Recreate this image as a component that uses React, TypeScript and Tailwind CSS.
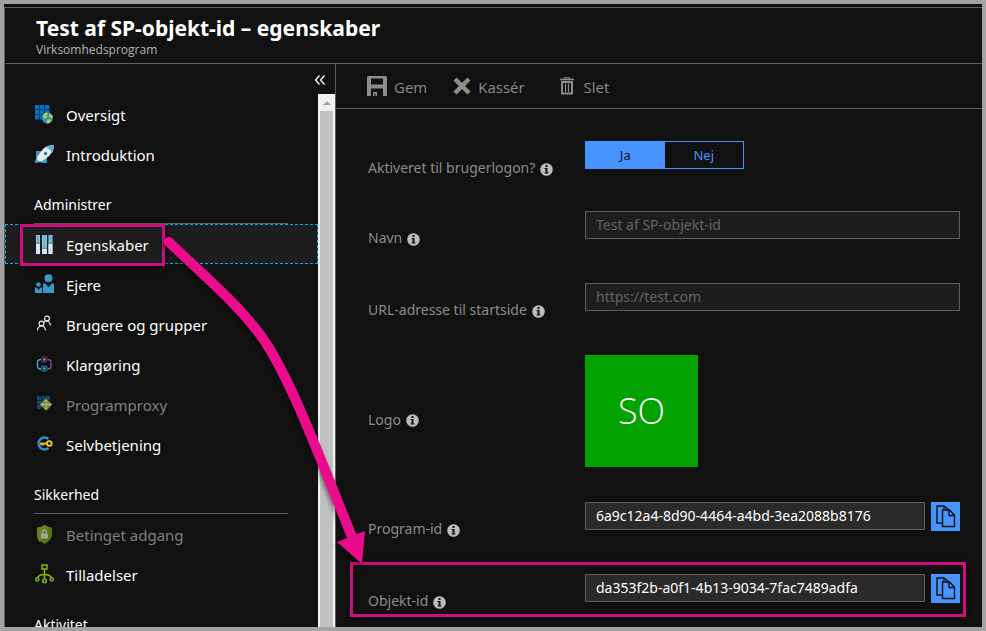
import type { ReactNode } from "react";

const OverviewIcon = () => (
  <svg width="20" height="20" viewBox="0 0 20 20" aria-hidden="true">
    <g fill="#0072c6">
      <path d="M0 1h4.400v4.400H0zM5 1h4.400v4.400H5zM10 1h4.400v4.400H10zM0 6h4.400v4.400H0zM5 6h4.400v4.400H5zM10 6h4.400v4.400H10zM0 11h4.400v4.400H0zM5 11h4.400v4.400H5z" />
    </g>
    <circle cx="12.500" cy="14" r="5.500" fill="#3c91c9" />
    <path d="M8 11q2-3 4-2.500l1 2-2 1 1 2-2 1-2-1.500zM14 9q3 1 4 4l-2 1-2-1.500 1-2zM12 16l2.500-1 1.500 1.500-2 2.800-2 .2z" fill="#b8d432" />
  </svg>
);

const RocketIcon = () => (
  <svg width="20" height="20" viewBox="0 0 20 20" aria-hidden="true">
    <path d="M1 7h6l-3 5-3 2zM12 12v7H6l1-3z" fill="#3999c6" />
    <path d="M0 19l1-5 3 1 1 3z" fill="#59b4d9" />
    <path d="M19 1q-7 0-11 4l-6 8q0 4 4 5l8-6q5-5 5-11z" fill="#e8eaec" />
    <path d="M19 1q-5 0-8 2 4 2 6 6 2-3 2-8z" fill="#59b4d9" />
    <circle cx="10.500" cy="9.500" r="1.600" fill="#0072c6" />
  </svg>
);

const PropertiesIcon = () => (
  <svg width="20" height="20" viewBox="0 0 20 20" aria-hidden="true">
    <path d="M1 1h4v19H1zM7 1h5v19H7zM13.500 1h4v19h-4z" fill="#9fc4d6" />
    <path d="M2 1h2v8H2zM8.500 1h2v12h-2zM14.500 1h2v8h-2z" fill="#59b4d9" />
    <path d="M1 10h4v10H1zM7 15h5v5H7zM13.500 10h4v10h-4z" fill="#d3e6f1" />
    <path d="M1 8.500h4V10H1zM7 13.500h5V15H7zM13.500 8.500h4V10h-4z" fill="#8a8f92" />
  </svg>
);

const OwnersIcon = () => (
  <svg width="20" height="20" viewBox="0 0 20 20" fill="#3999c6" aria-hidden="true">
    <circle cx="13.500" cy="4.300" r="4" />
    <path d="M8 9.500h2.500l3 4 3-4h1.500q1 0 1 1V19H8z" />
    <circle cx="3.500" cy="10.500" r="2.300" />
    <path d="M0 13.500h1.500l2 2.500 2-2.500H7V19H0z" />
  </svg>
);

const UsersIcon = () => (
  <svg width="20" height="20" viewBox="0 0 20 20" fill="none" stroke="#e8e8e8" strokeWidth="1.200" aria-hidden="true">
    <circle cx="12" cy="4.500" r="2.400" />
    <path d="M8.500 9q1-2 3.500-2t3.500 4.500" />
    <circle cx="6.500" cy="9.500" r="2.400" />
    <path d="M2.500 16.500q.5-4.500 4-4.500t4 4.500" />
  </svg>
);

const ProvisioningIcon = () => (
  <svg width="20" height="20" viewBox="0 0 20 20" fill="none" strokeWidth="1.300" aria-hidden="true">
    <path d="M6.500 5.500H5Q2.500 6 2.500 8v4q0 3 3 3h1" stroke="#3fa7d6" />
    <path d="M12.500 5.500h1q2.500.5 2.500 2.500v4q0 3-3 3h-.5" stroke="#8f3fb0" />
    <circle cx="9.300" cy="5.600" r="2.800" stroke="#68217a" />
    <circle cx="9.300" cy="14.600" r="2.800" stroke="#0072c6" />
    <circle cx="9.300" cy="5.600" r="1.300" fill="#7fba00" />
    <circle cx="9.300" cy="14.600" r="1.300" fill="#7fba00" />
  </svg>
);

const ProxyIcon = () => (
  <svg width="20" height="20" viewBox="0 0 20 20" aria-hidden="true">
    <path d="M2 2h4v4H2zM6.500 2h4v4h-4zM11 2h4v4h-4zM2 6.500h4v4H2zM6.500 6.500h4v4h-4zM2 11h4v4H2z" fill="#10466f" />
    <path d="M11 4l6.500 6.500L11 17 4.500 10.500z" fill="#71842d" />
    <path d="M11 6v9M6.500 10.500h9M9.500 7.500L11 6l1.500 1.500M9.500 13.500L11 15l1.500-1.500M8 9l-1.500 1.500L8 12M14 9l1.500 1.500L14 12" fill="none" stroke="#b4bd92" />
  </svg>
);

const SelfServiceIcon = () => (
  <svg width="20" height="20" viewBox="0 0 20 20" fill="none" aria-hidden="true">
    <path d="M13.500 5A6 6 0 1 0 13.500 14" stroke="#2f8fd0" strokeWidth="2.400" />
    <circle cx="14.300" cy="9.500" r="2.300" stroke="#fcd116" strokeWidth="1.800" />
    <path d="M12 9.500H5M6.500 9.500v2M8.500 9.500v2" stroke="#fba919" strokeWidth="1.800" />
  </svg>
);

const ShieldIcon = () => (
  <svg width="20" height="20" viewBox="0 0 20 20" aria-hidden="true">
    <path d="M9.500 1q3.500 2.500 7.500 2.500V10q0 6-7.500 10Q2 16 2 10V3.500Q6 3.500 9.500 1z" fill="#53760f" />
    <path d="M9.500 1Q6 3.500 2 3.500V10q0 6 3 8L14 3z" fill="#64851f" />
    <path d="M6 9.500h7v5H6z" fill="#a3a3a3" />
    <path d="M7.500 9.500V8q0-2 2-2t2 2v1.500" fill="none" stroke="#a3a3a3" strokeWidth="1.300" />
  </svg>
);

const PermissionsIcon = () => (
  <svg width="20" height="20" viewBox="0 0 20 20" fill="none" stroke="#7fba00" strokeWidth="1.500" aria-hidden="true">
    <path d="M7 1h5v4H7zM9.500 5v10M9.500 10.500q-6 0-7 3.500M9.500 10.500q6 0 7 3.500" />
    <circle cx="2.300" cy="15.300" r="1.600" />
    <circle cx="9.500" cy="16.800" r="1.800" />
    <circle cx="16.700" cy="15.300" r="1.600" />
  </svg>
);

const InfoIcon = () => (
  <svg width="13" height="13" viewBox="0 0 13 13" className="mt-[2px] shrink-0" aria-hidden="true">
    <circle cx="6.500" cy="6.500" r="6.300" fill="#bdbdbd" />
    <path d="M5.500 2h2v2h-2zM4.500 5h3v4.500h1v1h-4v-1h1V6h-1z" fill="#111" />
  </svg>
);

const SaveIcon = () => (
  <svg width="20" height="20" viewBox="0 0 20 20" aria-hidden="true">
    <path fillRule="evenodd" d="M1 0h18l1 1v19h-4v-7.500H4V20H0V1zM4 2.500h12v6H4zM6 16h4v4H8.500v-2.500H7.500V20H6z" fill="#8c8c8c" />
  </svg>
);

const DiscardIcon = () => (
  <svg width="18" height="18" viewBox="0 0 18 18" aria-hidden="true">
    <path d="M2 2l14 14M16 2L2 16" stroke="#8c8c8c" strokeWidth="4.500" />
  </svg>
);

const TrashIcon = () => (
  <svg width="14" height="18" viewBox="0 0 14 18" fill="none" stroke="#8c8c8c" aria-hidden="true">
    <path d="M0 2.500h14" strokeWidth="1.600" />
    <path d="M4.500 2V.7h5V2" />
    <path d="M2 5h10v11.500H2z" strokeWidth="2" />
    <path d="M5.500 6.500v8.500M8.500 6.500v8.500" strokeWidth="1.200" />
  </svg>
);

const CopyIcon = () => (
  <svg width="20" height="23" viewBox="0 0 20 23" fill="none" stroke="#111" strokeWidth="1.400" aria-hidden="true">
    <path d="M6 18H1V1h7l5 4" />
    <path d="M6.500 5h7l5 5v11.500h-12z" />
    <path d="M13 5v5.500h5.500" />
    <path d="M8 1v3.500" />
  </svg>
);

function NavItem({
  icon,
  children,
  muted = false,
  selected = false,
}: {
  icon: ReactNode;
  children: ReactNode;
  muted?: boolean;
  selected?: boolean;
}) {
  return (
    <li className="relative">
      <a
        href="#"
        aria-current={selected ? "page" : undefined}
        className={`flex h-10 items-center gap-[11px] border pl-[29px] text-[15px] leading-5 ${
          selected ? "border-dashed border-[#00abec] bg-[#1d1d1d]" : "border-transparent"
        } ${muted ? "text-[#808080]" : "text-white"}`}
      >
        {icon}
        <span className="pt-0.5">{children}</span>
      </a>
      {selected && (
        <span className="pointer-events-none absolute top-0 left-[15px] h-[42px] w-[145px] border-3 border-[#cb0f7f] shadow-[2px_2px_4px_#0008]" />
      )}
    </li>
  );
}

function Heading({ children }: { children: ReactNode }) {
  return (
    <h2 className="mr-[30px] ml-[29px] h-[50px] border-b border-[#5e5e5e] pt-[21px] text-[14px] leading-5 text-white">
      {children}
    </h2>
  );
}

function Row({
  label,
  id,
  center = false,
  children,
}: {
  label: string;
  id?: string;
  center?: boolean;
  children: ReactNode;
}) {
  return (
    <div className={`flex ${center ? "items-center" : "items-start"}`}>
      <div className="flex w-[217px] shrink-0 items-center gap-[5px] pt-[17px]">
        <label htmlFor={id} className="text-[14px] leading-5 text-[#8c8c8c]">
          {label}
        </label>
        <InfoIcon />
      </div>
      {children}
    </div>
  );
}

const fieldClass = "h-7 min-w-0 flex-1 border border-[#5e5e5e] px-[10px] pb-0.5 text-[14px] leading-5 outline-none";

function CopyField({ id, value }: { id: string; value: string }) {
  return (
    <div className="flex flex-1 items-start gap-[6px]">
      <input id={id} readOnly defaultValue={value} className={`${fieldClass} bg-[#2a2a2a] text-white`} />
      <button type="button" aria-label="Kopiér" className="flex size-[29px] items-center justify-center bg-[#4894fe]">
        <CopyIcon />
      </button>
    </div>
  );
}

export default function App() {
  return (
    <div className="relative h-screen overflow-hidden border-4 border-[#a3a3a3] bg-[#111] pt-[3px] font-['Noto_Sans','Open_Sans',sans-serif]">
      <div className="flex h-full flex-col border-t border-l border-[#5e5e5e]">
        <header className="h-14 shrink-0 border-b border-[#5e5e5e] pl-[31px]">
          <h1 className="pt-[6px] text-[21px] leading-7 font-bold text-white">Test af SP-objekt-id – egenskaber</h1>
          <p className="font-['Open_Sans',sans-serif] text-[12px] leading-4 text-[#b4b4b4]">Virksomhedsprogram</p>
        </header>
        <div className="flex min-h-0 flex-1">
          <aside className="flex w-[331px] shrink-0 flex-col border-r border-[#5e5e5e]">
            <button aria-label="Skjul menu" className="flex h-[30px] shrink-0 items-center self-end px-[9px] pt-0.5 text-white">
              <svg width="12" height="12" viewBox="0 0 12 12" fill="none" stroke="currentColor" strokeWidth="1.300">
                <path d="M5.500 1.500L1.500 6l4 4.500M10.500 1.500L6.500 6l4 4.500" />
              </svg>
            </button>
            <div className="flex min-h-0 flex-1">
              <nav className="min-w-0 flex-1 overflow-hidden">
                <ul>
                  <NavItem icon={<OverviewIcon />}>Oversigt</NavItem>
                  <NavItem icon={<RocketIcon />}>Introduktion</NavItem>
                </ul>
                <Heading>Administrer</Heading>
                <ul>
                  <NavItem icon={<PropertiesIcon />} selected>Egenskaber</NavItem>
                  <NavItem icon={<OwnersIcon />}>Ejere</NavItem>
                  <NavItem icon={<UsersIcon />}>Brugere og grupper</NavItem>
                  <NavItem icon={<ProvisioningIcon />}>Klargøring</NavItem>
                  <NavItem icon={<ProxyIcon />} muted>Programproxy</NavItem>
                  <NavItem icon={<SelfServiceIcon />}>Selvbetjening</NavItem>
                </ul>
                <Heading>Sikkerhed</Heading>
                <ul>
                  <NavItem icon={<ShieldIcon />} muted>Betinget adgang</NavItem>
                  <NavItem icon={<PermissionsIcon />}>Tilladelser</NavItem>
                </ul>
                <Heading>Aktivitet</Heading>
              </nav>
              <div className="flex w-[17px] flex-col items-center bg-[#f1f1f1]">
                <div className="flex h-[17px] shrink-0 items-center">
                  <svg width="8" height="4" viewBox="0 0 8 4" aria-hidden="true">
                    <path d="M0 4l4-4 4 4z" fill="#a3a3a3" />
                  </svg>
                </div>
                <div className="w-[13px] flex-1 bg-[#c1c1c1]" />
              </div>
            </div>
          </aside>
          <main className="min-w-0 flex-1">
            <div className="flex h-[45px] items-center border-b border-[#5e5e5e] pl-[31px] font-['Open_Sans',sans-serif] text-[15px] leading-5 text-[#8c8c8c]">
              <button className="flex items-center gap-[7px]">
                <SaveIcon />
                <span className="pt-0.5">Gem</span>
              </button>
              <button className="ml-[26px] flex items-center gap-[7px]">
                <DiscardIcon />
                <span className="pt-0.5">Kassér</span>
              </button>
              <button className="ml-[35px] flex items-center gap-[10px]">
                <TrashIcon />
                <span className="pt-0.5">Slet</span>
              </button>
            </div>
            <form className="pt-8 pr-[22px] pl-8">
              <Row label="Aktiveret til brugerlogon?">
                <div className="flex h-7 w-[159px] border border-[#4894fe] text-[13px] leading-5">
                  <button type="button" aria-pressed="true" className="flex-1 bg-[#4894fe] text-[#111]">Ja</button>
                  <button type="button" aria-pressed="false" className="flex-1 text-[#4894fe]">Nej</button>
                </div>
              </Row>
              <div className="flex flex-col gap-[35px] pt-[33px]">
                <Row label="Navn" id="name">
                  <input id="name" placeholder="Test af SP-objekt-id" className={`${fieldClass} bg-[#1d1d1d] placeholder:text-[#646464]`} />
                </Row>
                <Row label="URL-adresse til startside" id="url">
                  <input id="url" placeholder="https://test.com" className={`${fieldClass} bg-[#1d1d1d] placeholder:text-[#646464]`} />
                </Row>
                <Row label="Logo" center>
                  <div className="flex h-28 w-[113px] items-center justify-center bg-[#04a200] font-['Open_Sans',sans-serif] text-[36px] leading-none font-light text-white">
                    SO
                  </div>
                </Row>
                <Row label="Program-id" id="app-id">
                  <CopyField id="app-id" value="6a9c12a4-8d90-4464-a4bd-3ea2088b8176" />
                </Row>
                <div className="relative">
                  <Row label="Objekt-id" id="object-id">
                    <CopyField id="object-id" value="da353f2b-a0f1-4b13-9034-7fac7489adfa" />
                  </Row>
                  <span className="pointer-events-none absolute -top-3 -right-[6px] -left-[18px] h-[55px] border-3 border-[#cb0f7f] shadow-[2px_2px_4px_#0008]" />
                </div>
              </div>
            </form>
          </main>
        </div>
      </div>
      <svg className="pointer-events-none absolute top-0 left-0 drop-shadow-[-1px_3px_2px_#0007]" width="400" height="600" viewBox="4 4 400 600" fill="none" aria-hidden="true">
        <path d="M169 242C205 277 242 307 266 343C293 386 315 445 352 537" stroke="#ec0a8d" strokeWidth="10" />
        <circle cx="169" cy="242" r="5" fill="#ec0a8d" />
        <path d="M337 542l28-11-3 33z" fill="#ec0a8d" />
      </svg>
    </div>
  );
}
